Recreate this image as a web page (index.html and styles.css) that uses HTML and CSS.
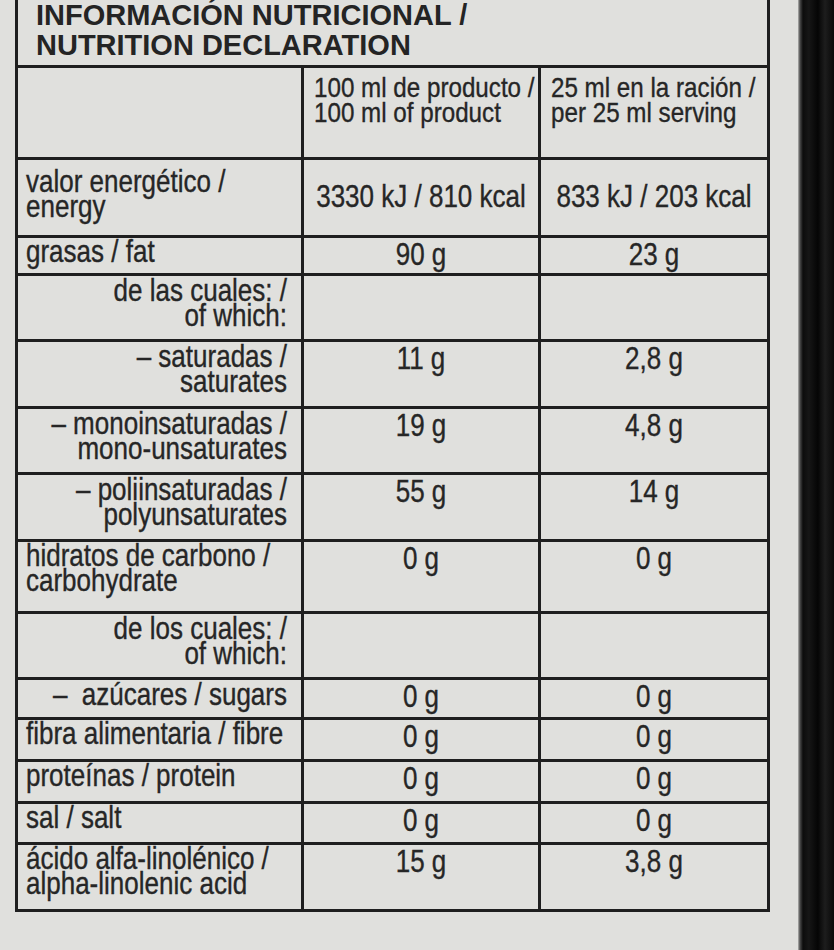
FILE: index.html
```html
<!DOCTYPE html>
<html lang="es">
<head>
<meta charset="utf-8">
<title>Información nutricional</title>
<link rel="stylesheet" href="styles.css">
</head>
<body>
<div class="page">
  <div class="paper">
    <table class="nutri">
      <colgroup>
        <col class="c-name">
        <col class="c-100">
        <col class="c-serv">
      </colgroup>
      <tr class="r-title">
        <th colspan="3" class="title">INFORMACIÓN NUTRICIONAL /<br>NUTRITION DECLARATION</th>
      </tr>
      <tr class="r-head">
        <td></td>
        <td class="head"><span class="t">100 ml de producto /<br>100 ml of product</span></td>
        <td class="head"><span class="t">25 ml en la ración /<br>per 25 ml serving</span></td>
      </tr>
      <tr class="r-energy">
        <td class="name energy"><span class="t">valor energético /<br>energy</span></td>
        <td class="val mid"><span class="t">3330 kJ / 810 kcal</span></td>
        <td class="val mid"><span class="t">833 kJ / 203 kcal</span></td>
      </tr>
      <tr class="r-one">
        <td class="name"><span class="t">grasas / fat</span></td>
        <td class="val"><span class="t">90 g</span></td>
        <td class="val"><span class="t">23 g</span></td>
      </tr>
      <tr class="r-two">
        <td class="name sub"><span class="t">de las cuales: /<br>of which:</span></td>
        <td></td>
        <td></td>
      </tr>
      <tr class="r-two-b">
        <td class="name sub"><span class="t">– saturadas /<br>saturates</span></td>
        <td class="val"><span class="t">11 g</span></td>
        <td class="val"><span class="t">2,8 g</span></td>
      </tr>
      <tr class="r-two">
        <td class="name sub"><span class="t">– monoinsaturadas /<br>mono-unsaturates</span></td>
        <td class="val"><span class="t">19 g</span></td>
        <td class="val"><span class="t">4,8 g</span></td>
      </tr>
      <tr class="r-two-b">
        <td class="name sub"><span class="t">– poliinsaturadas /<br>polyunsaturates</span></td>
        <td class="val"><span class="t">55 g</span></td>
        <td class="val"><span class="t">14 g</span></td>
      </tr>
      <tr class="r-two-c">
        <td class="name"><span class="t">hidratos de carbono /<br>carbohydrate</span></td>
        <td class="val"><span class="t">0 g</span></td>
        <td class="val"><span class="t">0 g</span></td>
      </tr>
      <tr class="r-two">
        <td class="name sub"><span class="t">de los cuales: /<br>of which:</span></td>
        <td></td>
        <td></td>
      </tr>
      <tr class="r-one-a">
        <td class="name sub"><span class="t">–&nbsp; azúcares / sugars</span></td>
        <td class="val"><span class="t">0 g</span></td>
        <td class="val"><span class="t">0 g</span></td>
      </tr>
      <tr class="r-one-b">
        <td class="name"><span class="t">fibra alimentaria / fibre</span></td>
        <td class="val"><span class="t">0 g</span></td>
        <td class="val"><span class="t">0 g</span></td>
      </tr>
      <tr class="r-one-b">
        <td class="name"><span class="t">proteínas / protein</span></td>
        <td class="val"><span class="t">0 g</span></td>
        <td class="val"><span class="t">0 g</span></td>
      </tr>
      <tr class="r-one-c">
        <td class="name"><span class="t">sal / salt</span></td>
        <td class="val"><span class="t">0 g</span></td>
        <td class="val"><span class="t">0 g</span></td>
      </tr>
      <tr class="r-two-b">
        <td class="name"><span class="t">ácido alfa-linolénico /<br>alpha-linolenic acid</span></td>
        <td class="val"><span class="t">15 g</span></td>
        <td class="val"><span class="t">3,8 g</span></td>
      </tr>
    </table>
  </div>
  <div class="strip"></div>
</div>
</body>
</html>
```

FILE: styles.css
```css
html, body {
  margin: 0;
  padding: 0;
  background: #dfdfdc;
}

.page {
  display: flex;
  width: 834px;
  height: 950px;
  overflow: hidden;
}

.paper {
  flex: 1;
  background: #e0e0dd;
  padding-left: 15px;
}

.strip {
  width: 36px;
  height: 950px;
  background:
    linear-gradient(90deg, #b5b5b2 0, #4a4a4a 2px, #0c0c0c 5px, #161616 30%, #050505 55%, #1d1d1d 75%, #080808 100%);
}

.nutri {
  border-collapse: collapse;
  table-layout: fixed;
  width: 752px;
  font-family: "Liberation Sans", Arial, sans-serif;
  font-size: 26px;
  line-height: 21px;
  color: #262626;
}

.c-name { width: 286px; }
.c-100 { width: 237px; }
.c-serv { width: 229px; }

.nutri td,
.nutri th {
  border: 3px solid #1f1f1f;
  vertical-align: top;
  padding: 2px 8px 0 8px;
  white-space: nowrap;
}

.nutri .t {
  display: inline-block;
  vertical-align: top;
  transform: scaleY(1.18);
  transform-origin: 50% 0;
  -webkit-text-stroke: 0.3px #262626;
}

.nutri th.title {
  border-top: none;
  text-align: left;
  font-weight: bold;
  font-size: 29px;
  line-height: 30px;
  color: #242424;
  padding: 0 0 0 18px;
}

.r-title { height: 66px; }
.r-head { height: 92px; }
.r-energy { height: 78px; }
.r-one { height: 38px; }
.r-two { height: 66px; }
.r-two-b { height: 67px; }
.r-two-c { height: 72px; }
.r-one-a { height: 40px; }
.r-one-b { height: 42px; }
.r-one-c { height: 41px; }

.nutri td.head {
  padding: 7px 0 0 10px;
  font-size: 24.2px;
  line-height: 21.5px;
}

.nutri td.head .t {
  transform: scaleY(1.15);
}

.nutri td.name {
  text-align: left;
  padding-left: 8px;
}

.nutri td.energy {
  padding-top: 10px;
}

.nutri td.sub {
  text-align: right;
  padding-right: 14px;
  padding-top: 3px;
}

.nutri td.val {
  text-align: center;
  padding: 5px 0 0 0;
}

.nutri td.val.mid {
  vertical-align: middle;
  padding: 0 0 4px 0;
}
```
